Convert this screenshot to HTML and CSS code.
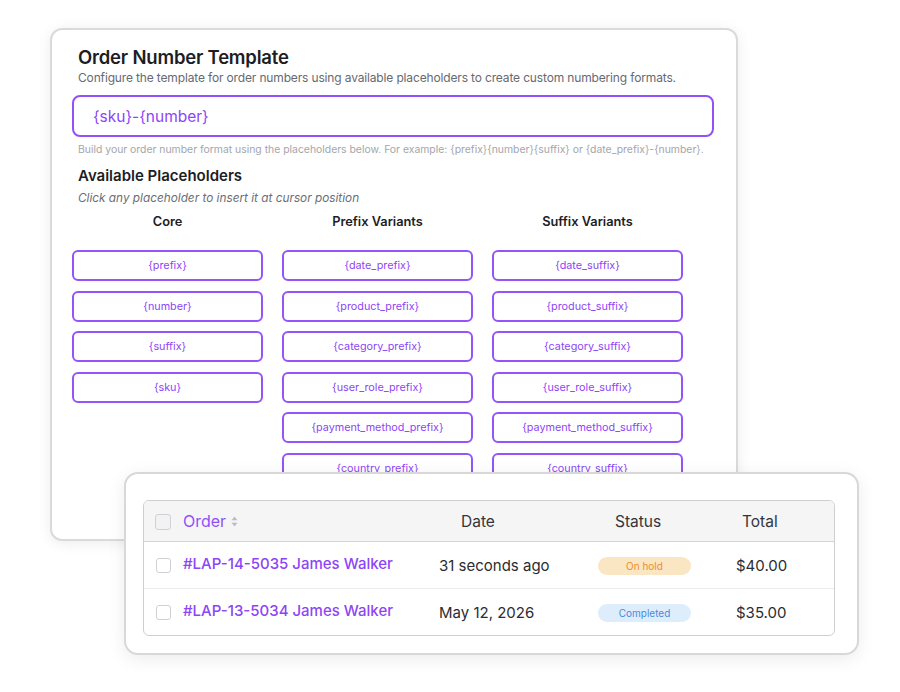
FILE: index.html
```html
<!DOCTYPE html>
<html lang="en">
  <head>
    <meta charset="UTF-8" />
    <meta name="viewport" content="width=device-width, initial-scale=1.0" />
    <title>Order Number Template</title>
    <link rel="stylesheet" href="styles.css">
  </head>

  <body>
    <div class="stage">
      <section class="template-card">
        <h1 class="title">Order Number Template</h1>
        <p class="description">Configure the template for order numbers using available placeholders to create custom numbering formats.</p>
        <div class="template-input">{sku}-{number}</div>
        <p class="help">Build your order number format using the placeholders below. For example: {prefix}{number}{suffix} or {date_prefix}-{number}.</p>
        <h2 class="subtitle">Available Placeholders</h2>
        <p class="hint">Click any placeholder to insert it at cursor position</p>

        <div class="placeholder-grid">
          <div class="group">
            <h3 class="group-title">Core</h3>
            <button class="chip">{prefix}</button>
            <button class="chip">{number}</button>
            <button class="chip">{suffix}</button>
            <button class="chip">{sku}</button>
          </div>
          <div class="group">
            <h3 class="group-title">Prefix Variants</h3>
            <button class="chip">{date_prefix}</button>
            <button class="chip">{product_prefix}</button>
            <button class="chip">{category_prefix}</button>
            <button class="chip">{user_role_prefix}</button>
            <button class="chip">{payment_method_prefix}</button>
            <button class="chip">{country_prefix}</button>
            <button class="chip">{shipping_prefix}</button>
          </div>
          <div class="group">
            <h3 class="group-title">Suffix Variants</h3>
            <button class="chip">{date_suffix}</button>
            <button class="chip">{product_suffix}</button>
            <button class="chip">{category_suffix}</button>
            <button class="chip">{user_role_suffix}</button>
            <button class="chip">{payment_method_suffix}</button>
            <button class="chip">{country_suffix}</button>
            <button class="chip">{shipping_suffix}</button>
          </div>
        </div>
      </section>

      <section class="orders-card">
        <div class="orders">
          <div class="row head">
            <span class="check"></span>
            <span class="col-order">Order
              <svg class="sort" width="7" height="11" viewBox="0 0 7 11">
                <path d="M3.5 0.5 L6.5 4.2 L0.5 4.2 Z" fill="#bdbdbd" />
                <path d="M3.5 10.5 L6.5 6.8 L0.5 6.8 Z" fill="#bdbdbd" />
              </svg>
            </span>
            <span class="col-date">Date</span>
            <span class="col-status">Status</span>
            <span class="col-total">Total</span>
          </div>
          <div class="row">
            <span class="check"></span>
            <a class="col-order link">#LAP-14-5035 James Walker</a>
            <span class="col-date">31 seconds ago</span>
            <span class="col-status"><span class="badge on-hold">On hold</span></span>
            <span class="col-total">$40.00</span>
          </div>
          <div class="row">
            <span class="check"></span>
            <a class="col-order link">#LAP-13-5034 James Walker</a>
            <span class="col-date">May 12, 2026</span>
            <span class="col-status"><span class="badge completed">Completed</span></span>
            <span class="col-total">$35.00</span>
          </div>
        </div>
      </section>
    </div>
  </body>
</html>
```

FILE: styles.css
```css
body {
  margin: 0;
  background-color: #ffffff;
  font-family: "Inter", "Noto Sans", sans-serif;
  color: #1d1d24;
}

.stage {
  position: relative;
  width: 900px;
  height: 692px;
  padding: 28px 0 0 50px;
  box-sizing: border-box;
}

/* template settings card */

.template-card {
  width: 688px;
  height: 513px;
  box-sizing: border-box;
  padding: 15px 22px 0 20px;
  border: 2px solid #dadada;
  border-radius: 12px;
  background-color: #fff;
  box-shadow: 0 2px 14px rgba(0, 0, 0, 0.08);
  overflow: hidden;
}

.title {
  margin: 0 0 0 6px;
  font-size: 18.5px;
  line-height: 24px;
  font-weight: 600;
  letter-spacing: -0.2px;
}

.description {
  margin: 0 0 0 6px;
  font-size: 12px;
  line-height: 18px;
  letter-spacing: -0.15px;
  color: #666a70;
  white-space: nowrap;
}

.template-input {
  margin-top: 8px;
  height: 42px;
  box-sizing: border-box;
  padding: 0 19px;
  display: flex;
  align-items: center;
  border: 2px solid #9150f8;
  border-radius: 8px;
  font-size: 15.5px;
  color: #8d45f7;
}

.help {
  margin: 5px 0 0 6px;
  font-size: 10.4px;
  line-height: 16px;
  color: #a3a6ab;
  white-space: nowrap;
}

.subtitle {
  margin: 8px 0 0 6px;
  font-size: 15px;
  line-height: 20px;
  font-weight: 600;
}

.hint {
  margin: 4px 0 0 6px;
  font-size: 11.8px;
  line-height: 16px;
  font-style: italic;
  color: #6b6e73;
}

.placeholder-grid {
  margin-top: 7px;
  display: grid;
  grid-template-columns: repeat(3, 191px);
  column-gap: 19px;
  align-items: start;
}

.group {
  display: flex;
  flex-direction: column;
  gap: 9.6px;
}

.group-title {
  margin: 0 0 9.4px;
  font-size: 12.8px;
  line-height: 18px;
  font-weight: 600;
  text-align: center;
}

.chip {
  height: 31px;
  border: 2px solid #9355f9;
  border-radius: 6px;
  background: #fff;
  font-family: inherit;
  font-size: 10.8px;
  color: #8d45f7;
  padding: 0;
}

/* recent orders card */

.orders-card {
  position: absolute;
  left: 124px;
  top: 472px;
  width: 735px;
  height: 183px;
  box-sizing: border-box;
  padding: 26px 22px 0 17px;
  border: 2px solid #d8d8d8;
  border-radius: 14px;
  background-color: #fff;
  box-shadow: 0 4px 18px rgba(0, 0, 0, 0.08);
}

.orders {
  border: 1.5px solid #cfcfcf;
  border-radius: 6px;
  overflow: hidden;
}

.row {
  display: grid;
  grid-template-columns: 39px 256px 159px 138px 1fr;
  align-items: center;
  height: 46px;
  font-size: 15px;
  color: #2c2c30;
}

.row + .row {
  border-top: 1px solid #ececec;
}

.row.head {
  height: 40px;
  background-color: #f5f5f5;
  border-bottom: 1.5px solid #d4d4d4;
  font-size: 15.5px;
  color: #34343a;
}

.row.head + .row {
  border-top: none;
}

.check {
  justify-self: end;
  width: 13px;
  height: 13px;
  margin-right: 12px;
  border: 1.5px solid #cfd1d4;
  border-radius: 3px;
  background-color: #fff;
}

.head .check {
  width: 14px;
  height: 14px;
  background-color: #f2f2f2;
  margin-top: 1px;
}

.col-order {
  display: flex;
  align-items: center;
  gap: 5px;
}

.head .col-order {
  color: #9150f8;
  font-size: 16px;
}

.head .col-date {
  padding-left: 22px;
}

.head .col-status {
  padding-left: 17px;
}

.head .col-total {
  padding-left: 6px;
}

.link {
  color: #8d45f7;
  font-weight: 500;
  font-size: 15px;
  margin-top: -3px;
}

.badge {
  display: inline-flex;
  align-items: center;
  justify-content: center;
  width: 93px;
  height: 18px;
  border-radius: 9px;
  font-size: 10px;
}

.on-hold {
  background-color: #fae6c3;
  color: #f08d2c;
}

.completed {
  background-color: #deedfc;
  color: #4a89dc;
}
```
